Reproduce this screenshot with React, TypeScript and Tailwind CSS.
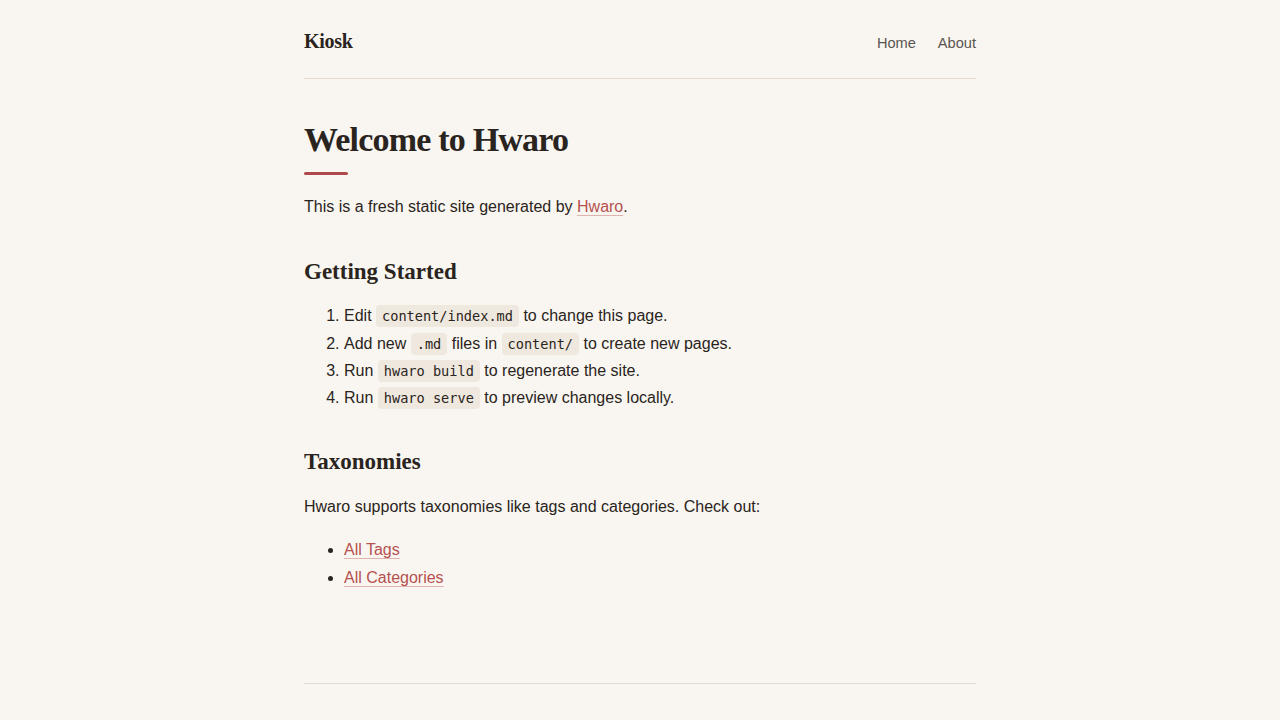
import React from 'react';

const Code = ({ children }: { children: React.ReactNode }) => (
  <code className="bg-[#efe8df] rounded-[4px] px-[6px] py-[3px] text-[13.6px] leading-none text-[#2a2420] font-['DejaVu_Sans_Mono',monospace]">
    {children}
  </code>
);

const Link = ({ children }: { children: React.ReactNode }) => (
  <a href="#" className="text-[#b5514f] underline decoration-[#e0b3ae] underline-offset-[3px]">
    {children}
  </a>
);

export default function App() {
  return (
    <div className="min-h-screen bg-[#f9f6f1] text-[#2a2420] font-['Liberation_Sans',sans-serif]">
      <div className="max-w-[672px] mx-auto">
        <header className="flex items-baseline justify-between pt-[26px] pb-[22px] border-b border-[#e8ddd0]">
          <div className="text-[20px] font-bold font-['Liberation_Serif',serif] tracking-[-0.3px] text-[#2a2420]">Kiosk</div>
          <nav className="flex gap-[22px] text-[14.6px] text-[#5a5450]">
            <a href="#">Home</a>
            <a href="#">About</a>
          </nav>
        </header>

        <main className="pt-[40px] pb-[91px]">
          <h1 className="text-[34px] font-bold font-['Liberation_Serif',serif] tracking-[-0.8px] leading-tight">Welcome to Hwaro</h1>
          <div className="w-[44px] h-[3px] bg-[#b04a4a] rounded-full mt-[10px]" />
          <p className="mt-[18px] text-[16px] leading-[27px]">
            This is a fresh static site generated by <Link>Hwaro</Link>.
          </p>

          <h2 className="mt-[38px] text-[23px] font-bold font-['Liberation_Serif',serif] leading-tight">Getting Started</h2>
          <ol className="mt-[16px] list-decimal pl-[40px] text-[16px] leading-[27.3px]">
            <li>Edit <Code>content/index.md</Code> to change this page.</li>
            <li>Add new <Code>.md</Code> files in <Code>content/</Code> to create new pages.</li>
            <li>Run <Code>hwaro build</Code> to regenerate the site.</li>
            <li>Run <Code>hwaro serve</Code> to preview changes locally.</li>
          </ol>

          <h2 className="mt-[37px] text-[23px] font-bold font-['Liberation_Serif',serif] leading-tight">Taxonomies</h2>
          <p className="mt-[16px] text-[16px] leading-[27px]">Hwaro supports taxonomies like tags and categories. Check out:</p>
          <ul className="mt-[16px] list-disc pl-[40px] text-[16px] leading-[28px]">
            <li><Link>All Tags</Link></li>
            <li><Link>All Categories</Link></li>
          </ul>
        </main>

        <footer className="border-t border-[#e2dcd3] h-[40px]" />
      </div>
    </div>
  );
}
